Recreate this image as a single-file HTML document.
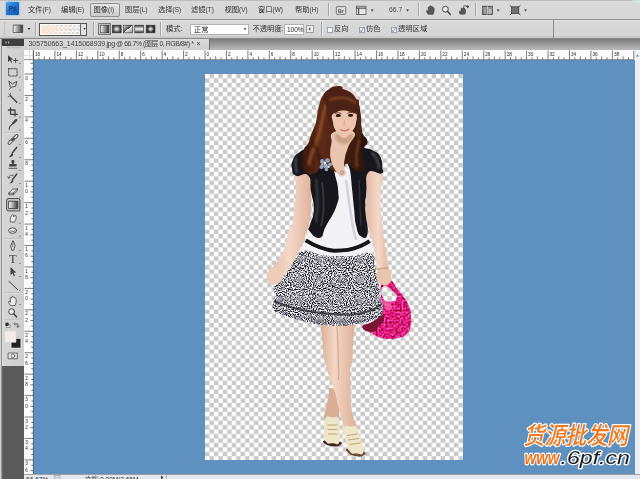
<!DOCTYPE html>
<html lang="zh-CN">
<head>
<meta charset="utf-8">
<title>Photoshop</title>
<style>
html,body{margin:0;padding:0;}
body{width:640px;height:479px;overflow:hidden;position:relative;background:#5e90c0;
 font-family:"Liberation Sans","Noto Sans CJK SC",sans-serif;font-size:7px;color:#222;}
.abs{position:absolute;}
#menubar{left:0;top:0;width:640px;height:20px;background:#d9d9d9;border-top:1px solid #bebebe;border-bottom:1px solid #8e8e8e;box-sizing:border-box;}
#optbar{left:0;top:20px;width:640px;height:19px;background:linear-gradient(#d8d8d8 0,#d5d5d5 85%,#c4c4c4 100%);border-top:1px solid #e4e4e4;box-sizing:border-box;border-bottom:1px solid #8a8a8a;}
#tabbar{left:0;top:39px;width:640px;height:11px;background:linear-gradient(#7c7c7c,#bababa);}
#tab{left:24px;top:39px;width:186px;height:11px;background:linear-gradient(#dcdcdc,#d0d0d0);border-right:1px solid #6f6f6f;box-sizing:border-box;
 font-size:6.9px;line-height:10.5px;color:#3a3a3a;white-space:nowrap;padding-left:4.5px;}
#hruler{left:24px;top:50px;width:610.5px;height:9.7px;background:#fbfbfb;}
#vruler{left:24px;top:50px;width:9.4px;height:424px;background:#fbfbfb;}
#tools{left:0;top:39px;width:24px;height:440px;background:#5a5a5a;}
#toolpanel{left:2.4px;top:46px;width:21.4px;height:320px;background:linear-gradient(90deg,#e4e4e4 0,#d6d6d6 1px,#cecece);}
#toolhead{left:2.4px;top:38.5px;width:21.4px;height:7.4px;background:#3e3e3e;}
#leftedge{left:0;top:39px;width:3px;height:440px;background:linear-gradient(90deg,#d2d2d2 0,#d2d2d2 0.7px,#9a9a9a 0.7px,#8c8c8c 2.3px,#6a6a6a 2.3px);}
#vscroll{left:634.5px;top:50px;width:6px;height:429px;background:#eceff4;}
#status{left:24px;top:474px;width:616px;height:5px;background:#e4e7ec;border-top:1px solid #9aa0a8;box-sizing:border-box;}
#canvas{left:205px;top:74px;width:258px;height:386px;
 background:#fff;}
.mi,.ot,#tab,.gt{opacity:0.99;}
.mi{top:0;height:19px;line-height:20px;font-size:7.3px;color:#2e2e2e;white-space:nowrap;}
.mi small{font-size:6.4px;color:#333;}
.ot{top:20px;height:18px;line-height:18px;font-size:7.3px;color:#2e2e2e;white-space:nowrap;}
.sep{width:1px;background:#a5a5a5;border-right:1px solid #ececec;}
.cb{width:6px;height:6px;border:1px solid #9aa5b3;background:#f4f6f9;box-sizing:border-box;font-size:5.5px;line-height:4.5px;color:#223;text-align:center;}
#ovl{left:0;top:0;}
</style>
</head>
<body>
<div class="abs" id="menubar"></div>
<div class="abs" id="optbar"></div>
<div class="abs" id="tabbar"></div>
<div class="abs" id="tab">305750663_1415068939<span style="letter-spacing:-0.42px">.jpg @ 66.7% (图层 0, RGB/8#) * &nbsp;×</span></div>
<div class="abs" id="tools"></div>
<div class="abs" id="leftedge"></div>
<div class="abs" id="toolhead"></div>
<div class="abs" id="toolpanel"></div>
<div class="abs" id="hruler"></div>
<div class="abs" id="vruler"></div>
<div class="abs" id="vscroll"></div>
<div class="abs" id="status"></div>
<div class="abs" id="canvas"></div>
<div class="abs" style="left:90px;top:3px;width:30px;height:14px;border:1px solid #8f8f8f;border-radius:2px;box-sizing:border-box;background:linear-gradient(#e6e6e6,#cdcdcd);"></div>
<div class="abs mi" style="left:28px">文件<small>(F)</small></div>
<div class="abs mi" style="left:61px">编辑<small>(E)</small></div>
<div class="abs mi" style="left:93.5px">图像<small>(I)</small></div>
<div class="abs mi" style="left:125px">图层<small>(L)</small></div>
<div class="abs mi" style="left:158px">选择<small>(S)</small></div>
<div class="abs mi" style="left:191px">滤镜<small>(T)</small></div>
<div class="abs mi" style="left:224.5px">视图<small>(V)</small></div>
<div class="abs mi" style="left:258px">窗口<small>(W)</small></div>
<div class="abs mi" style="left:295px">帮助<small>(H)</small></div>
<div class="abs" style="left:6px;top:2px;width:12.6px;height:13.2px;background:linear-gradient(135deg,#4ea6ea,#1b6cc2 55%,#0f58a8);box-shadow:0 0 1.5px 0.5px #9cc8f0;box-sizing:border-box;border-radius:1px;color:#0b3a80;font-size:6.6px;font-weight:bold;line-height:13px;text-align:center;opacity:0.99;letter-spacing:-0.3px;">Ps</div>
<div class="abs mi" style="left:389px;color:#444;font-size:6.8px">66.7</div>
<div class="abs ot" style="left:166px">模式:</div>
<div class="abs" style="left:190px;top:24px;width:59px;height:11px;background:#fff;border:1px solid #b2b2b2;box-sizing:border-box;font-size:7.3px;line-height:9px;padding-left:3px;white-space:nowrap;opacity:0.99;">正常</div>
<div class="abs ot" style="left:252.5px">不透明度:</div>
<div class="abs" style="left:284px;top:24px;width:20px;height:11px;background:#fff;border:1px solid #b2b2b2;box-sizing:border-box;font-size:6.5px;line-height:9px;padding-left:2px;white-space:nowrap;opacity:0.99;">100%</div>
<div class="abs" style="left:306px;top:25px;width:8px;height:8px;background:#e9e9e9;border:1px solid #a0a0a0;box-sizing:border-box;"></div>
<div class="abs cb" style="left:327px;top:26.5px"></div><div class="abs ot" style="left:334px">反向</div>
<div class="abs cb" style="left:359px;top:26.5px">✓</div><div class="abs ot" style="left:366px">仿色</div>
<div class="abs cb" style="left:391px;top:26.5px">✓</div><div class="abs ot" style="left:398px">透明区域</div>
<div class="abs sep" style="left:35px;top:22px;height:14px"></div>
<div class="abs sep" style="left:92.5px;top:22px;height:14px"></div>
<div class="abs sep" style="left:159.5px;top:22px;height:14px"></div>
<div class="abs sep" style="left:321px;top:22px;height:14px"></div>
<div class="abs sep" style="left:327.5px;top:3px;height:13px"></div>
<div class="abs sep" style="left:417.5px;top:3px;height:13px"></div>
<div class="abs sep" style="left:474.5px;top:3px;height:13px"></div>
<div class="abs" style="left:553px;top:20px;width:1px;height:18px;background:#8a8a8a"></div>
<div class="abs" style="left:39px;top:22.5px;width:48px;height:13px;border:1px solid #555;box-sizing:border-box;background:#fff;"><div style="position:absolute;left:1px;top:1px;width:39px;height:9px;background:linear-gradient(90deg,#fbe6da,rgba(251,230,218,0)),repeating-conic-gradient(#d0d0d0 0 25%,#fff 0 50%) 0 0/4.4px 4.4px;"></div><div style="position:absolute;right:0;top:0;width:5px;height:11px;background:#e4e4e4;border-left:1px solid #666;"></div></div>
<div class="abs" style="left:26px;top:474.5px;font-size:6.6px;line-height:9px;color:#222;white-space:nowrap;opacity:0.99;">66.67%</div>
<div class="abs" style="left:85px;top:474.5px;font-size:6.6px;line-height:9px;color:#222;white-space:nowrap;opacity:0.99;">文档:2.00M/2.66M</div>
<svg class="abs" id="ovl" width="640" height="479" viewBox="0 0 640 479" font-family="Liberation Sans, sans-serif">
<g stroke="#3c3c3c" stroke-width="0.65" fill="none">
<path d="M24 59.6H634M33.3 50V474" stroke="#4a4a4a" stroke-width="0.6"/>
<path d="M24 55.5H33M29.5 50V59" stroke="#999" stroke-width="0.5" stroke-dasharray="0.6 0.6"/>
<path d="M33.48 50.5V59.6M38.84 57.3V59.6M44.20 56.3V59.6M49.56 57.3V59.6M54.92 50.5V59.6M60.28 57.3V59.6M65.64 56.3V59.6M71.00 57.3V59.6M76.36 50.5V59.6M81.72 57.3V59.6M87.08 56.3V59.6M92.44 57.3V59.6M97.80 50.5V59.6M103.16 57.3V59.6M108.52 56.3V59.6M113.88 57.3V59.6M119.24 50.5V59.6M124.60 57.3V59.6M129.96 56.3V59.6M135.32 57.3V59.6M140.68 50.5V59.6M146.04 57.3V59.6M151.40 56.3V59.6M156.76 57.3V59.6M162.12 50.5V59.6M167.48 57.3V59.6M172.84 56.3V59.6M178.20 57.3V59.6M183.56 50.5V59.6M188.92 57.3V59.6M194.28 56.3V59.6M199.64 57.3V59.6M205.00 50.5V59.6M210.36 57.3V59.6M215.72 56.3V59.6M221.08 57.3V59.6M226.44 50.5V59.6M231.80 57.3V59.6M237.16 56.3V59.6M242.52 57.3V59.6M247.88 50.5V59.6M253.24 57.3V59.6M258.60 56.3V59.6M263.96 57.3V59.6M269.32 50.5V59.6M274.68 57.3V59.6M280.04 56.3V59.6M285.40 57.3V59.6M290.76 50.5V59.6M296.12 57.3V59.6M301.48 56.3V59.6M306.84 57.3V59.6M312.20 50.5V59.6M317.56 57.3V59.6M322.92 56.3V59.6M328.28 57.3V59.6M333.64 50.5V59.6M339.00 57.3V59.6M344.36 56.3V59.6M349.72 57.3V59.6M355.08 50.5V59.6M360.44 57.3V59.6M365.80 56.3V59.6M371.16 57.3V59.6M376.52 50.5V59.6M381.88 57.3V59.6M387.24 56.3V59.6M392.60 57.3V59.6M397.96 50.5V59.6M403.32 57.3V59.6M408.68 56.3V59.6M414.04 57.3V59.6M419.40 50.5V59.6M424.76 57.3V59.6M430.12 56.3V59.6M435.48 57.3V59.6M440.84 50.5V59.6M446.20 57.3V59.6M451.56 56.3V59.6M456.92 57.3V59.6M462.28 50.5V59.6M467.64 57.3V59.6M473.00 56.3V59.6M478.36 57.3V59.6M483.72 50.5V59.6M489.08 57.3V59.6M494.44 56.3V59.6M499.80 57.3V59.6M505.16 50.5V59.6M510.52 57.3V59.6M515.88 56.3V59.6M521.24 57.3V59.6M526.60 50.5V59.6M531.96 57.3V59.6M537.32 56.3V59.6M542.68 57.3V59.6M548.04 50.5V59.6M553.40 57.3V59.6M558.76 56.3V59.6M564.12 57.3V59.6M569.48 50.5V59.6M574.84 57.3V59.6M580.20 56.3V59.6M585.56 57.3V59.6M590.92 50.5V59.6M596.28 57.3V59.6M601.64 56.3V59.6M607.00 57.3V59.6M612.36 50.5V59.6M617.72 57.3V59.6M623.08 56.3V59.6M628.44 57.3V59.6M633.80 50.5V59.6"/>
<path d="M30.3 63.28H33.3M31.3 68.64H33.3M24.5 74.00H33.3M31.3 79.36H33.3M30.3 84.72H33.3M31.3 90.08H33.3M24.5 95.44H33.3M31.3 100.80H33.3M30.3 106.16H33.3M31.3 111.52H33.3M24.5 116.88H33.3M31.3 122.24H33.3M30.3 127.60H33.3M31.3 132.96H33.3M24.5 138.32H33.3M31.3 143.68H33.3M30.3 149.04H33.3M31.3 154.40H33.3M24.5 159.76H33.3M31.3 165.12H33.3M30.3 170.48H33.3M31.3 175.84H33.3M24.5 181.20H33.3M31.3 186.56H33.3M30.3 191.92H33.3M31.3 197.28H33.3M24.5 202.64H33.3M31.3 208.00H33.3M30.3 213.36H33.3M31.3 218.72H33.3M24.5 224.08H33.3M31.3 229.44H33.3M30.3 234.80H33.3M31.3 240.16H33.3M24.5 245.52H33.3M31.3 250.88H33.3M30.3 256.24H33.3M31.3 261.60H33.3M24.5 266.96H33.3M31.3 272.32H33.3M30.3 277.68H33.3M31.3 283.04H33.3M24.5 288.40H33.3M31.3 293.76H33.3M30.3 299.12H33.3M31.3 304.48H33.3M24.5 309.84H33.3M31.3 315.20H33.3M30.3 320.56H33.3M31.3 325.92H33.3M24.5 331.28H33.3M31.3 336.64H33.3M30.3 342.00H33.3M31.3 347.36H33.3M24.5 352.72H33.3M31.3 358.08H33.3M30.3 363.44H33.3M31.3 368.80H33.3M24.5 374.16H33.3M31.3 379.52H33.3M30.3 384.88H33.3M31.3 390.24H33.3M24.5 395.60H33.3M31.3 400.96H33.3M30.3 406.32H33.3M31.3 411.68H33.3M24.5 417.04H33.3M31.3 422.40H33.3M30.3 427.76H33.3M31.3 433.12H33.3M24.5 438.48H33.3M31.3 443.84H33.3M30.3 449.20H33.3M31.3 454.56H33.3M24.5 459.92H33.3M31.3 465.28H33.3M30.3 470.64H33.3"/>
</g>
<g font-size="4.7" fill="#2a2a2a" opacity="0.99">
<text x="35.0" y="55.8">16</text>
<text x="56.4" y="55.8">14</text>
<text x="77.9" y="55.8">12</text>
<text x="99.3" y="55.8">10</text>
<text x="120.7" y="55.8">8</text>
<text x="142.2" y="55.8">6</text>
<text x="163.6" y="55.8">4</text>
<text x="185.1" y="55.8">2</text>
<text x="206.5" y="55.8">0</text>
<text x="227.9" y="55.8">2</text>
<text x="249.4" y="55.8">4</text>
<text x="270.8" y="55.8">6</text>
<text x="292.3" y="55.8">8</text>
<text x="313.7" y="55.8">10</text>
<text x="335.1" y="55.8">12</text>
<text x="356.6" y="55.8">14</text>
<text x="378.0" y="55.8">16</text>
<text x="399.5" y="55.8">18</text>
<text x="420.9" y="55.8">20</text>
<text x="442.3" y="55.8">22</text>
<text x="463.8" y="55.8">24</text>
<text x="485.2" y="55.8">26</text>
<text x="506.7" y="55.8">28</text>
<text x="528.1" y="55.8">30</text>
<text x="549.5" y="55.8">32</text>
<text x="571.0" y="55.8">34</text>
<text x="592.4" y="55.8">36</text>
<text x="613.9" y="55.8">38</text>
<text x="25.3" y="79.5">0</text>
<text x="25.3" y="100.9">2</text>
<text x="25.3" y="122.4">4</text>
<text x="25.3" y="143.8">6</text>
<text x="25.3" y="165.3">8</text>
<text x="25.3" y="186.7">1</text>
<text x="25.3" y="193.1">0</text>
<text x="25.3" y="208.1">1</text>
<text x="25.3" y="214.5">2</text>
<text x="25.3" y="229.6">1</text>
<text x="25.3" y="236.0">4</text>
<text x="25.3" y="251.0">1</text>
<text x="25.3" y="257.4">6</text>
<text x="25.3" y="272.5">1</text>
<text x="25.3" y="278.9">8</text>
<text x="25.3" y="293.9">2</text>
<text x="25.3" y="300.3">0</text>
<text x="25.3" y="315.3">2</text>
<text x="25.3" y="321.7">2</text>
<text x="25.3" y="336.8">2</text>
<text x="25.3" y="343.2">4</text>
<text x="25.3" y="358.2">2</text>
<text x="25.3" y="364.6">6</text>
<text x="25.3" y="379.7">2</text>
<text x="25.3" y="386.1">8</text>
<text x="25.3" y="401.1">3</text>
<text x="25.3" y="407.5">0</text>
<text x="25.3" y="422.5">3</text>
<text x="25.3" y="428.9">2</text>
<text x="25.3" y="444.0">3</text>
<text x="25.3" y="450.4">4</text>
<text x="25.3" y="465.4">3</text>
<text x="25.3" y="471.8">6</text>
</g>
<defs><pattern id="chk" x="205" y="74" width="8.889" height="8.889" patternUnits="userSpaceOnUse"><rect x="4.4445" y="0" width="4.4445" height="4.4445" fill="#c8c8c8"/><rect x="0" y="4.4445" width="4.4445" height="4.4445" fill="#c8c8c8"/></pattern></defs><rect x="205" y="74" width="258" height="386" fill="url(#chk)"/>
<defs>
<filter id="soft" x="-5%" y="-5%" width="110%" height="110%"><feGaussianBlur stdDeviation="0.45"/></filter>
<filter id="soft2" x="-20%" y="-20%" width="140%" height="140%"><feGaussianBlur stdDeviation="1.2"/></filter>
<pattern id="skirtp" width="3.2" height="3.2" patternUnits="userSpaceOnUse" patternTransform="rotate(23)"><rect width="3.2" height="3.2" fill="#b9b9c0"/><rect x="0" y="0" width="1.5" height="1.3" fill="#26262c"/><rect x="1.8" y="1.7" width="1.2" height="1.4" fill="#34343a"/><rect x="1.9" y="0.1" width="1.1" height="1" fill="#f4f4f6"/><rect x="0.2" y="1.9" width="1.2" height="1.1" fill="#ededf0"/></pattern>
<filter id="noise" x="0" y="0" width="100%" height="100%" color-interpolation-filters="sRGB"><feTurbulence type="fractalNoise" baseFrequency="0.95" numOctaves="2" seed="7" result="n"/><feColorMatrix in="n" type="matrix" values="2.8 0 0 0 -0.80  2.8 0 0 0 -0.80  2.8 0 0 0 -0.76  0 0 0 0 1" result="g"/><feComposite in="g" in2="SourceGraphic" operator="in"/></filter>
<filter id="bnoise" x="0" y="0" width="100%" height="100%" color-interpolation-filters="sRGB"><feTurbulence type="fractalNoise" baseFrequency="0.5" numOctaves="2" seed="11" result="n"/><feColorMatrix in="n" type="matrix" values="1.3 0 0 0 0.22  0.9 0 0 0 -0.34  1.3 0 0 0 -0.17  0 0 0 0 1" result="g"/><feComposite in="g" in2="SourceGraphic" operator="in"/></filter>
<pattern id="bagp" width="3" height="3" patternUnits="userSpaceOnUse" patternTransform="rotate(30)"><rect width="3" height="3" fill="#e3217d"/><circle cx="1" cy="1" r="0.8" fill="#c4125f"/><circle cx="2.4" cy="2.3" r="0.6" fill="#f0509a"/></pattern>
<linearGradient id="hairg" x1="0" y1="0" x2="1" y2="0"><stop offset="0" stop-color="#35170c"/><stop offset="0.3" stop-color="#5e2b15"/><stop offset="0.6" stop-color="#4a2111"/><stop offset="1" stop-color="#28110a"/></linearGradient>
<linearGradient id="legg" x1="0" y1="0" x2="1" y2="0"><stop offset="0" stop-color="#d9ab92"/><stop offset="0.4" stop-color="#f3d6c4"/><stop offset="1" stop-color="#dcae96"/></linearGradient>
<linearGradient id="armg" x1="0" y1="0" x2="1" y2="0"><stop offset="0" stop-color="#e3b9a2"/><stop offset="0.5" stop-color="#f4d8c8"/><stop offset="1" stop-color="#dfb29a"/></linearGradient>
</defs>
<g filter="url(#soft)">
<path d="M367.5 172.0C362.6 178.3 367.2 178.3 366.8 191.0C366.4 203.7 366.1 199.7 366.2 210.0C366.3 220.3 365.6 214.0 367.0 222.0C368.4 230.0 367.9 224.0 370.4 234.0C372.9 244.0 372.3 240.7 374.5 252.0C376.7 263.3 376.0 260.3 377.0 268.0C378.0 275.7 376.8 270.3 377.5 275.0C378.2 279.7 376.8 278.7 379.0 282.0C381.2 285.3 380.7 284.5 384.0 285.0C387.3 285.5 386.7 285.8 389.0 283.5C391.3 281.2 391.2 283.2 391.0 278.0C390.8 272.8 390.1 276.5 388.5 268.0C386.9 259.5 388.0 263.8 386.3 252.5C384.6 241.2 385.1 246.5 383.5 234.0C381.9 221.5 382.5 228.0 381.5 215.0C380.5 202.0 380.5 209.3 380.5 195.0C380.5 180.7 385.8 179.7 381.5 172.0C377.2 164.3 372.4 165.7 367.5 172.0Z" fill="url(#armg)"/>
<path d="M377 269.5L388.5 267.5" stroke="#caa070" stroke-width="1.6" fill="none"/>
<path d="M330.0 388.0C326.5 388.0 330.0 389.3 328.6 396.0C327.2 402.7 327.1 400.3 325.8 408.0C324.5 415.7 323.5 414.3 324.6 419.0C325.7 423.7 324.9 421.7 329.0 422.0C333.1 422.3 333.5 424.7 337.0 420.0C340.5 415.3 338.8 416.0 339.5 408.0C340.2 400.0 342.2 402.7 339.0 396.0C335.8 389.3 333.5 388.0 330.0 388.0Z" fill="#d9ad96"/>
<path d="M330.0 310.0C322.0 310.7 324.1 307.7 321.0 312.0C317.9 316.3 320.2 313.3 320.6 323.0C321.0 332.7 321.1 328.7 322.3 341.0C323.5 353.3 322.9 351.7 324.2 360.0C325.5 368.3 324.6 360.2 326.3 366.0C328.0 371.8 326.8 369.5 329.4 377.5C332.0 385.5 331.2 380.2 334.2 390.0C337.2 399.8 335.6 396.3 338.4 406.8C341.2 417.3 340.4 413.7 342.5 421.4C344.6 429.1 341.9 426.5 344.6 430.0C347.3 433.5 346.7 432.7 350.5 432.0C354.3 431.3 354.9 432.2 356.1 428.0C357.3 423.8 355.6 426.4 354.0 419.3C352.4 412.2 352.3 416.6 351.2 406.8C350.1 397.0 351.1 399.8 350.8 390.0C350.5 380.2 350.4 385.5 350.3 377.5C350.2 369.5 349.9 371.8 350.6 366.0C351.3 360.2 351.4 368.3 352.3 360.0C353.2 351.7 352.4 353.3 353.3 341.0C354.2 328.7 354.5 332.7 354.9 323.0C355.3 313.3 357.8 316.3 354.5 312.0C351.2 307.7 353.2 310.7 345.0 310.0C336.8 309.3 338.0 309.3 330.0 310.0Z" fill="url(#legg)"/>
<path d="M337 327C338 345 339 362 338.5 380" stroke="#c9997f" stroke-width="1.2" fill="none" opacity="0.7"/>
<path d="M324.6 440.5C326.9 439.9 326.9 441.7 332.0 442.0C337.1 442.3 337.4 440.4 340.0 441.5C342.6 442.6 342.1 443.7 339.8 445.3C337.5 446.9 337.9 446.7 333.0 446.2C328.1 445.7 327.8 445.7 325.0 443.8C322.2 441.9 322.3 441.1 324.6 440.5Z" fill="#3d2416"/>
<path d="M325.5 418.5C328.2 414.3 327.6 417.1 332.0 417.3C336.4 417.5 336.2 414.8 338.8 419.0C341.4 423.2 339.6 422.3 339.8 430.0C340.0 437.7 341.8 437.6 339.5 442.0C337.2 446.4 337.7 443.6 333.0 443.3C328.3 443.0 328.5 445.4 325.5 441.0C322.5 436.6 323.9 437.5 323.9 430.0C323.9 422.5 322.8 422.7 325.5 418.5Z" fill="#efe5c9"/>
<path d="M327.5 425H337.5M327.5 429.5H337.5M328 434H337.5" stroke="#b99f6a" stroke-width="0.9"/>
<g transform="translate(-1.5,-0.5)">
<path d="M349.0 449.0C351.2 448.7 350.7 451.0 356.0 452.0C361.3 453.0 362.0 450.7 365.0 452.0C368.0 453.3 367.7 454.5 365.0 456.0C362.3 457.5 362.2 457.5 357.0 456.5C351.8 455.5 352.2 455.5 349.5 453.0C346.8 450.5 346.8 449.3 349.0 449.0Z" fill="#6b4a30"/>
<path d="M345.5 428.5C347.2 424.2 347.7 427.0 352.0 427.0C356.3 427.0 355.2 424.2 358.5 428.5C361.8 432.8 359.8 432.2 362.0 440.0C364.2 447.8 366.3 447.3 365.0 452.0C363.7 456.7 362.8 454.3 358.0 454.0C353.2 453.7 354.2 455.7 350.5 451.0C346.8 446.3 348.7 447.5 347.0 440.0C345.3 432.5 343.8 432.8 345.5 428.5Z" fill="#efe5c9"/>
<path d="M348.5 436L359 434.5M349.5 440.5L360.5 439M351 445L362 443.5" stroke="#b99f6a" stroke-width="0.9"/>
</g>
<path fill-rule="evenodd" d="M381.3 280.5C382.2 274.6 380.5 278.5 383.6 278.3C386.7 278.1 386.3 276.6 390.7 280.0C395.1 283.4 392.7 283.1 396.9 288.5C401.1 293.9 399.3 290.6 403.2 296.3C407.1 302.0 406.1 298.9 408.7 305.7C411.3 312.5 410.5 309.3 411.0 316.6C411.5 323.9 412.0 321.6 410.3 327.6C408.6 333.6 410.1 331.0 406.0 334.5C401.9 338.0 404.0 336.5 398.0 338.0C392.0 339.5 394.0 339.2 388.0 339.0C382.0 338.8 385.4 339.3 380.0 337.5C374.6 335.7 377.2 336.5 371.9 333.5C366.6 330.5 367.1 330.8 364.0 328.5C360.9 326.2 359.3 329.0 362.5 326.5C365.7 324.0 367.7 324.8 373.5 321.0C379.3 317.2 377.0 319.7 380.0 315.0C383.0 310.3 382.2 313.3 382.5 307.0C382.8 300.7 381.4 304.8 381.0 296.0C380.6 287.2 380.4 286.4 381.3 280.5Z M382.5 287.0C385.3 284.2 387.3 286.7 392.0 290.5C396.7 294.3 397.5 294.8 396.5 298.5C395.5 302.2 393.3 301.3 389.0 301.5C384.7 301.7 385.8 303.8 383.6 299.0C381.4 294.2 379.7 289.8 382.5 287.0Z" fill="#e3217d" filter="url(#bnoise)"/>
<path d="M362.5 326.8C363.0 323.4 367.2 325.4 373.5 321.5C379.8 317.6 378.0 315.7 381.5 315.0C385.0 314.3 385.0 315.7 384.0 319.5C383.0 323.3 382.5 322.4 378.5 326.5C374.5 330.6 377.3 331.7 372.0 331.8C366.7 331.9 362.0 330.2 362.5 326.8Z" fill="#7a1236"/>
<path d="M383.2 296.0C383.0 293.5 382.4 297.8 384.5 300.0C386.6 302.2 387.2 299.5 389.5 302.5C391.8 305.5 393.0 307.3 391.5 309.0C390.0 310.7 387.8 311.8 385.0 307.5C382.2 303.2 383.4 298.5 383.2 296.0Z" fill="#f06aa8" opacity="0.8"/>
<path d="M333.0 168.0C340.3 160.0 336.0 176.0 342.0 176.0C348.0 176.0 346.3 163.3 351.0 168.0C355.7 172.7 353.0 174.3 356.0 190.0C359.0 205.7 355.5 199.0 360.0 215.0C364.5 231.0 365.4 228.6 369.5 238.0C373.6 247.4 372.0 237.9 372.3 243.2C372.6 248.5 377.8 249.6 370.4 254.0C363.0 258.4 365.1 255.8 350.0 256.5C334.9 257.2 341.7 257.3 325.0 256.0C308.3 254.7 307.0 256.8 300.0 252.5C293.0 248.2 301.0 250.2 304.0 243.0C307.0 235.8 303.7 245.3 309.0 231.0C314.3 216.7 312.0 221.0 320.0 200.0C328.0 179.0 325.7 176.0 333.0 168.0Z" fill="#f3f3f7"/>
<path d="M346 180C349 200 351 222 356 240" stroke="#c9c9d6" stroke-width="2.5" fill="none" opacity="0.8"/>
<path d="M305.7 240.4C315 246 325 250 334 250.7C343 250.8 352 249.5 358 247C363 245 367 243 369.6 241" stroke="#121214" stroke-width="4" fill="none"/>
<path d="M300.0 252.0C310.1 247.8 311.7 254.4 325.0 255.5C338.3 256.6 337.9 256.5 350.0 256.0C362.1 255.5 363.7 250.7 370.4 253.8C377.1 256.9 373.0 260.4 375.0 267.6C377.0 274.8 376.4 273.0 377.9 280.7C379.4 288.4 379.2 288.1 380.5 296.3C381.8 304.5 383.3 305.7 382.6 311.3C381.9 316.9 384.0 313.9 377.7 317.2C371.4 320.5 369.0 321.5 358.9 323.8C348.8 326.1 350.0 325.5 340.0 325.8C330.0 326.1 331.3 326.1 321.3 324.8C311.3 323.5 312.6 323.6 302.6 321.0C292.6 318.4 291.6 318.3 283.8 315.2C276.0 312.1 275.6 314.4 273.3 309.4C271.0 304.4 274.9 302.0 275.0 296.3C275.1 290.6 272.6 291.8 273.8 288.0C275.0 284.2 275.9 286.5 279.4 282.0C282.9 277.5 281.5 279.3 287.0 271.3C292.5 263.3 289.9 256.2 300.0 252.0Z" fill="#99999f" filter="url(#noise)"/>
<path d="M296.5 173.0C292.2 178.0 296.8 178.7 296.0 191.0C295.2 203.3 295.1 199.7 294.0 210.0C292.9 220.3 294.6 214.0 292.6 222.0C290.6 230.0 291.2 224.0 288.0 234.0C284.8 244.0 287.7 241.5 283.0 252.0C278.3 262.5 278.8 258.8 274.0 265.5C269.2 272.2 270.8 267.8 268.5 272.0C266.2 276.2 266.5 274.3 267.0 278.0C267.5 281.7 267.0 281.2 270.0 283.0C273.0 284.8 272.3 284.5 276.0 283.5C279.7 282.5 278.3 282.5 281.0 280.0C283.7 277.5 280.7 280.7 284.0 276.0C287.3 271.3 286.2 273.8 291.0 266.0C295.8 258.2 293.5 263.2 298.5 252.5C303.5 241.8 302.2 245.5 306.0 234.0C309.8 222.5 308.3 229.3 310.0 218.0C311.7 206.7 311.3 214.0 311.0 200.0C310.7 186.0 313.8 185.0 309.0 176.0C304.2 167.0 300.8 168.0 296.5 173.0Z" fill="url(#armg)"/>
<path d="M274 301C295 311 330 315.500 352 314.500C366 313.500 376 309 381.500 304" stroke="#2c2c34" stroke-width="2.2" fill="none" opacity="0.8"/>
<path d="M275 309C295 318 330 323 352 322C366 321 376 317 382 312" stroke="#55555c" stroke-width="1" fill="none" opacity="0.6"/>
<path d="M329.8 152.5C325.9 146.5 325.8 150.9 320.0 150.0C314.2 149.1 313.9 148.3 308.2 149.0C302.5 149.7 302.8 150.0 298.8 152.8C294.8 155.6 294.9 155.1 293.1 159.4C291.3 163.7 291.2 164.4 292.0 168.8C292.8 173.2 291.7 174.0 296.0 175.8C300.3 177.6 304.2 171.3 308.2 175.4C312.2 179.5 309.5 182.1 311.0 191.3C312.5 200.5 314.1 201.0 313.8 210.0C313.5 219.0 311.1 219.4 310.0 225.0C308.9 230.6 306.9 227.6 309.5 231.0C312.1 234.4 315.4 239.1 319.8 237.8C324.2 236.5 321.6 234.4 326.0 226.0C330.4 217.6 333.0 215.7 336.3 206.4C339.6 197.1 338.7 200.3 338.2 191.3C337.7 182.3 336.7 182.9 334.5 172.6C332.3 162.3 333.7 158.5 329.8 152.5Z" fill="#16161a"/>
<path d="M348.0 160.0C349.2 154.0 351.1 153.2 355.0 150.0C358.9 146.8 357.6 147.8 362.6 148.1C367.6 148.4 369.1 148.5 373.9 151.0C378.7 153.5 378.3 153.3 380.5 157.5C382.7 161.7 382.1 162.6 382.3 166.9C382.5 171.2 385.1 172.0 381.4 173.5C377.7 175.0 372.3 167.9 368.3 172.6C364.3 177.3 367.2 181.3 366.4 191.3C365.6 201.3 365.1 198.7 365.4 210.0C365.7 221.3 368.9 226.6 367.6 233.5C366.3 240.4 363.6 238.3 360.5 236.0C357.4 233.7 357.7 231.9 356.0 225.0C354.3 218.1 355.2 219.0 354.2 210.0C353.2 201.0 353.3 201.3 352.3 191.3C351.3 181.3 351.5 180.9 350.4 172.6C349.3 164.3 346.8 166.0 348.0 160.0Z" fill="#16161a"/>
<g filter="url(#soft2)" fill="none" stroke-linecap="round"><path d="M296 158C295 163 295.500 168 297 172" stroke="#5a5a64" stroke-width="2.2" opacity="0.8"/><path d="M372 153C376 156 378.500 161 379 168" stroke="#5a5a64" stroke-width="2.4" opacity="0.8"/><path d="M316 180C318 195 318 208 316 222" stroke="#44444e" stroke-width="2.4" opacity="0.8"/></g>
<path d="M322 182C324 198 325 212 321 226" stroke="#3c3c44" stroke-width="2" fill="none" opacity="0.8"/>
<path d="M359 180C360 198 360 212 361 226" stroke="#34343c" stroke-width="1.6" fill="none" opacity="0.8"/>
<path d="M268.5 271.0C271.2 267.7 270.7 267.7 275.0 268.0C279.3 268.3 279.2 268.3 281.5 272.0C283.8 275.7 283.5 275.2 282.0 279.0C280.5 282.8 281.0 282.0 277.0 283.5C273.0 285.0 273.3 285.3 270.0 283.5C266.7 281.7 267.5 282.2 267.0 278.0C266.5 273.8 265.8 274.3 268.5 271.0Z" fill="#edcdb9"/>
<path d="M377.5 271.5C380.8 267.8 384.0 268.2 388.5 270.0C393.0 271.8 390.8 272.5 391.0 277.0C391.2 281.5 391.7 280.8 389.0 283.5C386.3 286.2 386.5 285.8 383.0 285.0C379.5 284.2 380.3 285.5 378.5 281.0C376.7 276.5 374.2 275.2 377.5 271.5Z" fill="#e9c4ae"/>
<path d="M337.0 86.2C341.2 85.8 339.6 86.1 343.5 87.5C347.4 88.9 346.0 87.8 350.0 90.8C354.0 93.8 354.1 93.2 356.9 97.5C359.7 101.8 358.1 100.0 359.2 105.3C360.3 110.6 360.0 108.9 360.6 115.2C361.2 121.5 360.7 120.9 361.3 126.4C361.9 131.9 360.8 128.9 362.7 133.4C364.6 137.9 367.1 137.1 367.5 141.5C367.9 145.9 365.5 143.7 364.0 148.0C362.5 152.3 362.5 150.9 362.6 155.7C362.8 160.5 364.5 159.4 364.5 164.0C364.5 168.6 365.4 169.2 362.6 171.0C359.8 172.8 359.5 172.1 355.1 170.0C350.7 167.9 351.4 164.8 348.0 164.0C344.6 163.2 345.6 165.1 343.8 167.5C342.0 169.9 344.3 170.7 342.0 172.0C339.7 173.3 340.5 173.7 336.0 172.0C331.5 170.3 331.2 168.4 327.0 166.5C322.8 164.6 324.4 164.6 322.0 165.5C319.6 166.4 321.4 167.1 319.0 169.5C316.6 171.9 317.3 172.3 314.0 173.5C310.7 174.7 311.3 175.0 308.0 173.5C304.7 172.0 305.0 172.6 303.0 168.5C301.0 164.4 301.2 165.6 301.4 160.0C301.5 154.4 301.5 155.0 303.5 150.0C305.5 145.0 306.1 147.4 308.2 143.3C310.3 139.2 309.0 140.5 310.5 136.3C312.0 132.1 311.7 133.4 313.3 129.2C314.9 125.0 314.8 126.8 316.0 122.2C317.2 117.6 316.3 119.3 317.4 113.8C318.4 108.3 317.8 109.4 319.5 103.9C321.2 98.4 320.0 100.1 323.0 95.5C326.0 90.9 325.3 91.5 329.5 88.7C333.7 85.9 332.8 86.6 337.0 86.2Z" fill="url(#hairg)"/>
<g filter="url(#soft2)" fill="none" stroke-linecap="round">
<path d="M329 96C324 108 322 122 319 134C316 146 310 154 309 164" stroke="#9a5630" stroke-width="3.2" opacity="0.75"/>
<path d="M334 92C345 92 354 98 357 110" stroke="#8a4a28" stroke-width="2.5" opacity="0.7"/>
<path d="M359 140C357 150 355 158 357 166" stroke="#8a4a28" stroke-width="2.6" opacity="0.7"/>
<path d="M313 142C316 152 322 158 321 166" stroke="#1f0d07" stroke-width="2.5" opacity="0.6"/>
</g>
<path d="M325 96C330 88 345 86 356 97C350 94 334 93 325 96Z" fill="#1e0c06" opacity="0.75" filter="url(#soft2)"/>
<path d="M334.0 132.0C328.0 134.9 332.5 137.7 331.5 143.0C330.5 148.3 330.3 147.5 330.2 152.0C330.1 156.5 330.0 155.7 331.0 160.0C332.0 164.3 332.0 164.1 334.0 168.0C336.0 171.9 336.4 172.2 338.5 174.5C340.6 176.8 340.1 176.9 342.0 176.5C343.9 176.1 344.9 175.8 345.5 173.0C346.1 170.2 344.3 170.1 344.2 166.0C344.1 161.9 343.9 162.8 345.0 157.5C346.1 152.2 346.1 153.1 348.5 146.3C350.9 139.5 357.9 135.8 354.0 132.0C350.1 128.2 340.0 129.1 334.0 132.0Z" fill="#e9c5af"/>
<path d="M335 138C339 146 348 146 353 138L353 134L335 134Z" fill="#c4947c" opacity="0.75" filter="url(#soft2)"/>
<circle cx="342" cy="172.5" r="1.6" fill="none" stroke="#8a7a70" stroke-width="0.7"/>
<g fill="#9aa6bd"><circle cx="322.5" cy="161.5" r="2.4"/><circle cx="327.5" cy="160.5" r="2.3"/><circle cx="330" cy="164.5" r="2.1"/><circle cx="325.5" cy="166" r="2.5"/><circle cx="321.5" cy="167" r="2"/><circle cx="326.5" cy="169.5" r="1.8"/><circle cx="325" cy="163" r="1.3" fill="#e6ebf5"/><circle cx="328.5" cy="167" r="1.1" fill="#eef2f8"/><circle cx="322" cy="164.5" r="0.9" fill="#dfe6f2"/><circle cx="324" cy="159.8" r="0.9" fill="#39404f"/><circle cx="328" cy="163.5" r="0.8" fill="#39404f"/><circle cx="323.6" cy="168" r="0.8" fill="#39404f"/></g>
<path d="M332.3 110.0C329.1 114.6 332.1 116.7 333.0 122.2C333.9 127.7 333.6 126.7 335.8 130.6C338.0 134.5 339.2 135.0 341.4 137.0C343.6 139.0 342.7 138.0 344.2 138.0C345.7 138.0 344.7 139.0 347.0 137.0C349.3 135.0 350.2 134.5 352.7 130.6C355.2 126.7 355.1 127.7 356.2 122.2C357.3 116.7 360.0 114.6 357.0 110.0C354.0 105.4 351.6 105.0 345.0 105.0C338.4 105.0 335.5 105.4 332.3 110.0Z" fill="#edc4ae"/>
<path d="M323.0 96.0C324.9 91.5 327.1 90.9 333.0 89.0C338.9 87.1 338.9 87.1 345.0 89.0C351.1 90.9 352.3 91.5 356.0 96.0C359.7 100.5 358.4 101.3 359.0 106.0C359.6 110.7 360.4 111.9 358.3 113.5C356.2 115.1 355.1 112.8 351.0 112.0C346.9 111.2 347.0 110.4 343.0 110.5C339.0 110.6 339.0 111.0 336.0 112.5C333.0 114.0 333.1 112.9 331.8 116.0C330.5 119.1 332.0 123.5 331.0 124.0C330.0 124.5 329.3 122.8 328.0 118.0C326.7 113.2 327.3 111.9 326.0 106.0C324.7 100.1 321.1 100.5 323.0 96.0Z" fill="#4e2412"/>
<path d="M330 100C338 96 348 97 356 103" stroke="#9a5630" stroke-width="2.2" fill="none" opacity="0.7" filter="url(#soft2)"/>
<path d="M357.0 108.0C358.2 105.3 359.1 108.0 360.5 114.0C361.9 120.0 360.8 119.3 361.3 126.0C361.8 132.7 362.9 129.7 362.0 134.0C361.1 138.3 360.7 139.7 358.5 139.0C356.3 138.3 356.1 137.7 355.5 132.0C354.9 126.3 356.3 130.0 356.8 122.0C357.3 114.0 355.8 110.7 357.0 108.0Z" fill="#4a2212"/>
<path d="M343.5 88C349 89 355 93 357.5 98.5" stroke="#e8d6da" stroke-width="2.4" fill="none" stroke-linecap="round"/>
<ellipse cx="338.3" cy="115.6" rx="2.6" ry="1.5" fill="#2a1812"/><ellipse cx="350.6" cy="115.2" rx="2.6" ry="1.5" fill="#2a1812"/>
<path d="M335 113.6C337 112.4 340 112.6 341.5 113.8M347.4 113.4C349 112.2 352.4 112 354 113.4" stroke="#3b2015" stroke-width="0.8" fill="none"/>
<path d="M340.8 129.8C343.5 131.2 346.5 131 348.8 129.2" stroke="#c26b6b" stroke-width="1.2" fill="none" stroke-linecap="round"/>
<path d="M344.5 120.5L344 125" stroke="#d3a68f" stroke-width="0.9"/>
</g>
<g id="toolicons" stroke-linecap="round" stroke-linejoin="round" opacity="0.86">
<path d="M19 64.0l1.3 0l0 -1.3z" fill="#222"/>
<path d="M19 77.5l1.3 0l0 -1.3z" fill="#222"/>
<path d="M19 90.5l1.3 0l0 -1.3z" fill="#222"/>
<path d="M19 104.0l1.3 0l0 -1.3z" fill="#222"/>
<path d="M19 117.5l1.3 0l0 -1.3z" fill="#222"/>
<path d="M19 130.5l1.3 0l0 -1.3z" fill="#222"/>
<path d="M19 145.0l1.3 0l0 -1.3z" fill="#222"/>
<path d="M19 158.0l1.3 0l0 -1.3z" fill="#222"/>
<path d="M19 171.0l1.3 0l0 -1.3z" fill="#222"/>
<path d="M19 184.0l1.3 0l0 -1.3z" fill="#222"/>
<path d="M19 197.5l1.3 0l0 -1.3z" fill="#222"/>
<path d="M19 211.5l1.3 0l0 -1.3z" fill="#222"/>
<path d="M19 223.5l1.3 0l0 -1.3z" fill="#222"/>
<path d="M19 236.5l1.3 0l0 -1.3z" fill="#222"/>
<path d="M19 251.0l1.3 0l0 -1.3z" fill="#222"/>
<path d="M19 264.0l1.3 0l0 -1.3z" fill="#222"/>
<path d="M19 277.0l1.3 0l0 -1.3z" fill="#222"/>
<path d="M19 290.5l1.3 0l0 -1.3z" fill="#222"/>
<path d="M19 305.0l1.3 0l0 -1.3z" fill="#222"/>
<path d="M5 132.5H22" stroke="#a9a9a9" stroke-width="0.7"/><path d="M5 133.2H22" stroke="#ececec" stroke-width="0.6"/>
<path d="M5 238.5H22" stroke="#a9a9a9" stroke-width="0.7"/><path d="M5 239.2H22" stroke="#ececec" stroke-width="0.6"/>
<path d="M5 292.5H22" stroke="#a9a9a9" stroke-width="0.7"/><path d="M5 293.2H22" stroke="#ececec" stroke-width="0.6"/>
<path d="M5 320.0H22" stroke="#a9a9a9" stroke-width="0.7"/><path d="M5 320.7H22" stroke="#ececec" stroke-width="0.6"/>
<path d="M7 47.5H20" stroke="#b4b4b4" stroke-width="1.4" stroke-dasharray="0.7 0.7"/>
<path d="M5.5 41l1.6 1.5l-1.6 1.5zM8 41l1.6 1.5l-1.6 1.5z" fill="#c8c8c8"/>
<path d="M8 55.3L8 62L9.8 60.3L11.2 62.8L12.2 62.3L10.9 59.8L13.3 59.5Z" fill="#2b2b2b"/>
<path d="M13.5 60.5H17.7M15.6 58.4V62.6" stroke="#2b2b2b" stroke-width="0.9"/>
<rect x="8.7" y="68.7" width="8.3" height="7.3" fill="none" stroke="#2b2b2b" stroke-width="0.9" stroke-dasharray="1.6 1.1"/>
<path d="M9 81.3L12.3 84L16.8 81.3L15.6 86.3L11 87.3L9.5 89.5M9 81.3L10.2 86.8" fill="none" stroke="#2b2b2b" stroke-width="0.9"/>
<path d="M10.2 95.5L16.8 102.3" stroke="#2b2b2b" stroke-width="1.4"/><path d="M9 94.2l1 1M8.2 96.5h1.2M10.6 93.3v1.2" stroke="#2b2b2b" stroke-width="0.6"/>
<path d="M10.6 107.8V114.3H17.3M8.4 110H15V116" fill="none" stroke="#2b2b2b" stroke-width="1.3"/>
<path d="M9 129.3L10 126.3L14 122.3" stroke="#2b2b2b" stroke-width="1.1" fill="none"/><path d="M13.3 123L16.2 120.2" stroke="#2b2b2b" stroke-width="2.4"/>
<path d="M9.3 143L16.8 135.8" stroke="#2b2b2b" stroke-width="3.4"/><path d="M9.3 143L16.8 135.8" stroke="#dcdcdc" stroke-width="1.8"/><path d="M12 140.4L14 138.4" stroke="#2b2b2b" stroke-width="1.6"/>
<path d="M16.8 147.3L12.3 153" stroke="#2b2b2b" stroke-width="1.5"/><path d="M12 153.2C10.5 154 10.8 156 8.6 157.2C11 157.6 13 156.4 13.3 154.3Z" fill="#2b2b2b"/>
<path d="M11.3 161.3a1.6 1.6 0 1 1 3.2 0c0 1.2-.7 1.6-.7 2.8h2.8v2.3H9.2v-2.3h2.8c0-1.2-.7-1.6-.7-2.8z" fill="#2b2b2b"/><path d="M9 168.3H16.8" stroke="#2b2b2b" stroke-width="0.9"/>
<path d="M16.8 174L12.6 179.5" stroke="#2b2b2b" stroke-width="1.4"/><path d="M12.3 179.7C11 180.5 11.2 182.2 9.3 183.2C11.5 183.5 13.2 182.5 13.5 180.7Z" fill="#2b2b2b"/><path d="M8.6 177.8a3 3 0 0 1 4.6-2.4" fill="none" stroke="#2b2b2b" stroke-width="0.8"/><path d="M7.7 176.8l.9 1.6l1.5-.9" fill="none" stroke="#2b2b2b" stroke-width="0.7"/>
<path d="M8.8 193L12.8 189H17.4L13.4 193ZM8.8 193V194.8H13.4V193M13.4 194.8L17.4 190.8V189" fill="#e6e6e6" stroke="#2b2b2b" stroke-width="0.8"/>
<rect x="6.6" y="198.5" width="13.3" height="12.4" rx="1.6" fill="#bdbdbd" stroke="#3a3a3a" stroke-width="1"/>
<defs><linearGradient id="tg" x1="0" y1="0" x2="1" y2="0"><stop offset="0" stop-color="#fff"/><stop offset="1" stop-color="#222"/></linearGradient></defs>
<rect x="9" y="201.3" width="8.8" height="7.2" fill="url(#tg)" stroke="#222" stroke-width="0.8"/>
<path d="M10.2 221.5C10 218 11.5 214.6 13 214.6C14 214.6 13.6 217 13.6 217C14.2 215.4 15.6 215 16 216C16.6 217.5 15.8 220 14.8 221.8Z" fill="#f0f0f0" stroke="#2b2b2b" stroke-width="0.8"/>
<ellipse cx="12.6" cy="230.6" rx="4" ry="2.8" fill="#ececec" stroke="#2b2b2b" stroke-width="0.9"/><path d="M10.6 231c1 .8 3 .8 4.4 0" fill="none" stroke="#2b2b2b" stroke-width="0.7"/>
<path d="M12.8 241L10.6 246L12 250.3H13.6L15 246Z" fill="#f2f2f2" stroke="#2b2b2b" stroke-width="0.9"/><path d="M12.8 243.6V247" stroke="#2b2b2b" stroke-width="0.8"/>
<text x="12.8" y="263" font-family="Liberation Serif, serif" font-size="12.5" text-anchor="middle" fill="#2b2b2b">T</text>
<path d="M10.5 267L10.5 275.2L12.5 273.3L13.9 276.3L15 275.8L13.6 272.8L16.2 272.5Z" fill="#2b2b2b"/>
<path d="M9 281.4L17.6 289.6" stroke="#2b2b2b" stroke-width="1"/>
<path d="M10.2 305.2C8.6 303 8.2 301.4 9 301.2C9.8 301 10.4 302.4 10.4 302.4L10.2 298.2C10.2 297.2 11.4 297.2 11.5 298.2L11.8 297C11.9 296.2 13 296.2 13.1 297.2L13.4 297.4C13.6 296.6 14.6 296.8 14.7 297.8L15 298.6C15.4 298 16.2 298.4 16.2 299.2C16.4 301.4 16 303.6 15.2 305.2Z" fill="#f2f2f2" stroke="#2b2b2b" stroke-width="0.8"/>
<circle cx="11.6" cy="311.6" r="2.9" fill="#ededed" stroke="#2b2b2b" stroke-width="1"/><path d="M13.8 313.8L16.6 317" stroke="#2b2b2b" stroke-width="1.5"/>
<rect x="7" y="324.4" width="3" height="3" fill="#fff" stroke="#222" stroke-width="0.5"/><rect x="5.4" y="322.7" width="3.2" height="3.2" fill="#111"/>
<path d="M15.2 324h2.8v2.8M14.8 322.8l-1 1.2l1.2 1M19.2 326.2l-1.2 1.2l-1.2-1" fill="none" stroke="#222" stroke-width="0.7"/>
<rect x="11.3" y="338.5" width="9.5" height="9.5" fill="#050505" stroke="#fff" stroke-width="0.5"/>
<rect x="4.8" y="331" width="11.2" height="11.3" fill="#f9f2ed" stroke="#d9d9d9" stroke-width="0.6"/>
<rect x="8.5" y="353" width="8.8" height="5.8" fill="#f3f3f3" stroke="#333" stroke-width="0.8"/><circle cx="12.9" cy="355.9" r="1.9" fill="none" stroke="#333" stroke-width="0.7"/>
</g>
<g id="topicons" opacity="0.9">
<path d="M4.5 22V36" stroke="#b0b0b0" stroke-width="1.2" stroke-dasharray="0.8 0.8"/>
<defs><linearGradient id="tg2" x1="0" y1="0" x2="1" y2="0"><stop offset="0" stop-color="#fff"/><stop offset="1" stop-color="#222"/></linearGradient>
<radialGradient id="rg"><stop offset="0" stop-color="#fff"/><stop offset="1" stop-color="#222"/></radialGradient>
<linearGradient id="refl" x1="0" y1="0" x2="0" y2="1"><stop offset="0" stop-color="#222"/><stop offset="0.5" stop-color="#fff"/><stop offset="1" stop-color="#222"/></linearGradient>
<linearGradient id="ang" x1="0" y1="0" x2="1" y2="1"><stop offset="0" stop-color="#eee"/><stop offset="0.5" stop-color="#333"/><stop offset="0.5" stop-color="#eee"/><stop offset="1" stop-color="#888"/></linearGradient></defs>
<rect x="13.2" y="25" width="9.6" height="7.6" fill="url(#tg2)" stroke="#333" stroke-width="0.7"/>
<path d="M27.5 28h3l-1.5 2z" fill="#222"/>
<path d="M83.2 28h2.6l-1.3 1.8z" fill="#222"/>
<rect x="98.6" y="23.6" width="12" height="10.8" fill="#c4c4c4" stroke="#555" stroke-width="0.8"/>
<rect x="100.3" y="25.2" width="8.6" height="7.6" fill="url(#tg2)" stroke="#222" stroke-width="0.6"/>
<rect x="112.3" y="25.2" width="8.8" height="7.6" fill="url(#rg)" stroke="#222" stroke-width="0.6"/>
<rect x="123.6" y="25.2" width="8.8" height="7.6" fill="url(#ang)" stroke="#222" stroke-width="0.6"/>
<rect x="134.8" y="25.2" width="8.8" height="7.6" fill="url(#refl)" stroke="#222" stroke-width="0.6"/>
<rect x="146.2" y="25.2" width="8.8" height="7.6" fill="#222" stroke="#222" stroke-width="0.6"/><path d="M150.6 25.6l3.6 3.4l-3.6 3.4l-3.6-3.4z" fill="url(#rg)"/>
<path d="M243.6 28.3h2.8l-1.4 1.9z" fill="#222"/>
<path d="M309 27.3l1.8 1.7l-1.8 1.7z" fill="#444"/>
<rect x="336.3" y="6.6" width="9.4" height="7.8" rx="0.8" fill="#dedede" stroke="#555" stroke-width="0.8"/><text x="341" y="12.7" font-size="5.2" font-weight="bold" text-anchor="middle" fill="#333">Br</text>
<rect x="356.4" y="6.2" width="9.6" height="8.2" fill="#e9e9e9" stroke="#444" stroke-width="0.8"/><path d="M356.4 8.2H366M358.6 8.2V14.4" stroke="#444" stroke-width="1.2"/>
<path d="M370.6 9.5h3l-1.5 2z" fill="#222"/>
<path d="M406 9.5h3l-1.5 2z" fill="#222"/>
<path d="M428.2 14.3C426.6 12.2 426 10.6 426.8 10.4C427.6 10.2 428.3 11.6 428.3 11.6L428.2 7.4C428.2 6.5 429.3 6.5 429.4 7.4L429.7 6.3C429.8 5.5 430.9 5.5 431 6.5L431.3 6.7C431.5 6 432.5 6.1 432.6 7.1L432.9 7.8C433.3 7.3 434.1 7.6 434.1 8.4C434.3 10.6 433.9 12.7 433.1 14.3Z" fill="#4a4a4a" stroke="#333" stroke-width="0.6"/>
<circle cx="445.4" cy="9.2" r="2.9" fill="#f2f2f2" stroke="#333" stroke-width="1"/><path d="M447.6 11.4L450.4 14.4" stroke="#333" stroke-width="1.5" stroke-linecap="round"/>
<path d="M460.2 14.2C459 12.6 459 11.2 459.8 11C460.6 10.8 461 12 461 12L461.2 8.6C461.2 7.8 462.2 7.8 462.3 8.6L463 7.6L464.2 8L465 8.8L465.6 10.2C465.8 12 465.4 13.2 464.8 14.2Z" fill="#4a4a4a" stroke="#333" stroke-width="0.6"/><path d="M463.2 6.4a3 3 0 0 1 4.6 1.6" fill="none" stroke="#333" stroke-width="0.9"/><path d="M466.4 5l1.6 3.2l1.4-2.2z" fill="#333"/>
<rect x="482.3" y="6.2" width="10.2" height="8.4" fill="#555" stroke="#333" stroke-width="0.7"/><path d="M487.4 6.2V14.6M482.3 8H492.5" stroke="#ddd" stroke-width="0.8"/><rect x="483.4" y="9" width="3.2" height="4.8" fill="#9a9a9a"/><rect x="488.3" y="9" width="3.4" height="4.8" fill="#bdbdbd"/>
<path d="M496.6 9.5h3l-1.5 2z" fill="#222"/>
<rect x="511.4" y="6.8" width="7.4" height="6.8" fill="#666" stroke="#333" stroke-width="0.8"/><path d="M509.8 5.4l2.2 2M520.4 5.4l-2.2 2M509.8 15l2.2-2M520.4 15l-2.2-2" stroke="#333" stroke-width="1"/>
<path d="M524 9.5h3l-1.5 2z" fill="#222"/>
<rect x="54.5" y="475.3" width="5.5" height="4" fill="#d0d4da" stroke="#8a8f98" stroke-width="0.6"/>
<path d="M161 475.2l2.4 2.2l-2.4 2.2z" fill="#222"/>
<path d="M166.500 474.5V479" stroke="#9aa0a8" stroke-width="0.8"/>
<ellipse cx="640" cy="0" rx="8" ry="3.4" fill="#d6ebe2" opacity="0.8"/>
<path d="M635.6 56.5l1.8-2.2l1.8 2.2z" fill="#8a8f98"/>
</g>
<g id="wm" font-family="Liberation Sans, 'Noto Sans CJK SC', sans-serif" stroke="#ffffff" stroke-width="2.4" stroke-linejoin="round" paint-order="stroke fill">
<text x="523.5" y="443.5" font-size="24" font-weight="500" fill="#f0771c" textLength="104.5" lengthAdjust="spacingAndGlyphs" font-style="italic">货源批发网</text>
<text x="524.5" y="464" font-size="19" font-weight="bold" fill="#f0771c" font-style="italic" textLength="35" lengthAdjust="spacingAndGlyphs">www</text>
<text x="560.5" y="464" font-size="19" fill="#1d1d1d" font-style="italic" textLength="69.5" lengthAdjust="spacingAndGlyphs">.6pf.cn</text>
</g>
</svg>
</body>
</html>
